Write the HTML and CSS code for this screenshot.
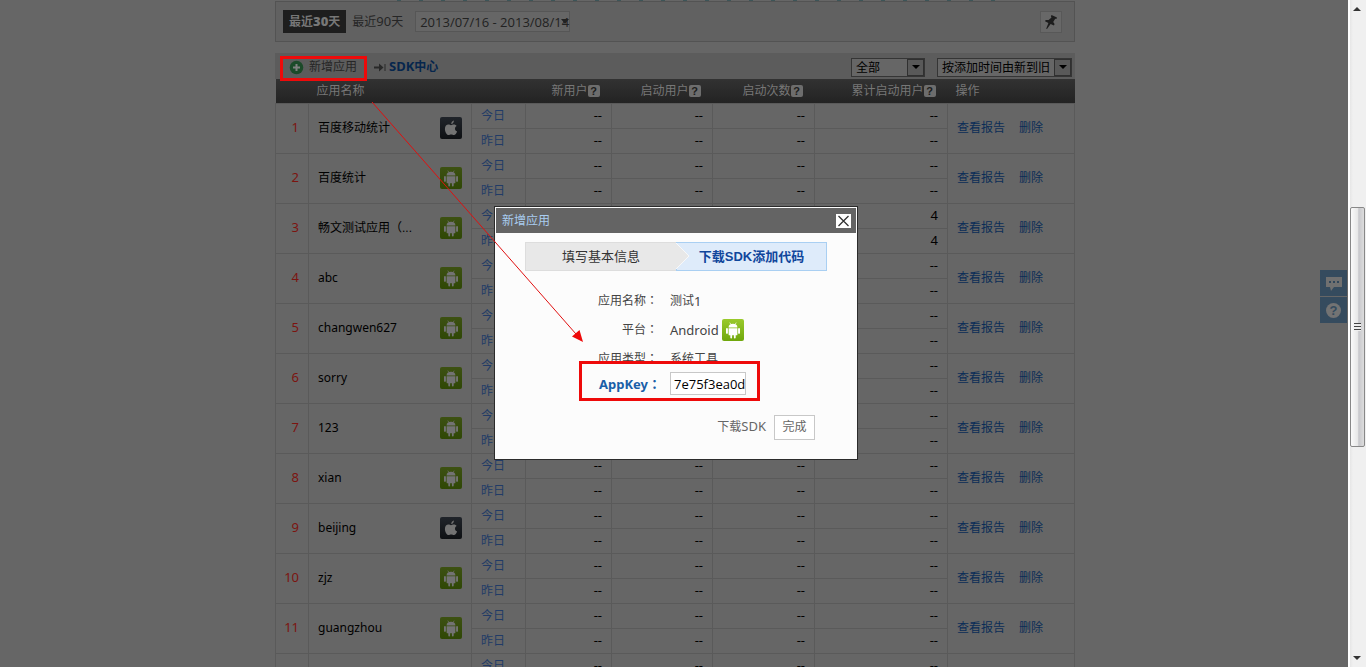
FILE: index.html
```
<!DOCTYPE html>
<html lang="zh-CN">
<head>
<meta charset="utf-8">
<title>百度移动统计</title>
<link rel="stylesheet" href="styles.css">
</head>
<body>
<svg class="defs" aria-hidden="true">
  <defs>
    <linearGradient id="g-green" x1="0" y1="0" x2="0" y2="1"><stop offset="0" stop-color="#9aca2c"/><stop offset="1" stop-color="#6fa70c"/></linearGradient>
    <linearGradient id="g-green-dim" x1="0" y1="0" x2="0" y2="1"><stop offset="0" stop-color="#3d5112"/><stop offset="1" stop-color="#2f4705"/></linearGradient>
    <linearGradient id="g-dark" x1="0" y1="0" x2="0" y2="1"><stop offset="0" stop-color="#20242a"/><stop offset="1" stop-color="#0e1013"/></linearGradient>
    <g id="robot">
      <path d="M7.8 3.6 9 5.6M14.2 3.6 13 5.6" stroke="currentColor" stroke-width=".7" fill="none"/>
      <path fill="currentColor" d="M6.6 8.5a4.4 3.7 0 0 1 8.8 0zM6.6 9.2h8.8v6.2a.9.9 0 0 1-.9.9h-.8v2.2a.9.9 0 0 1-1.8 0v-2.2h-1.8v2.2a.9.9 0 0 1-1.8 0v-2.2h-.8a.9.9 0 0 1-.9-.9zM4 9.9a.95.95 0 0 1 1.9 0v4a.95.95 0 0 1-1.9 0zM16.1 9.9a.95.95 0 0 1 1.9 0v4a.95.95 0 0 1-1.9 0z"/>
    </g>
    <symbol id="android" viewBox="0 0 22 22"><rect width="22" height="22" rx="2" fill="url(#g-green-dim)"/><use href="#robot"/></symbol>
    <symbol id="android-lit" viewBox="0 0 22 22"><rect width="22" height="22" rx="2" fill="url(#g-green)"/><use href="#robot"/></symbol>
    <symbol id="apple" viewBox="0 0 22 22"><rect width="22" height="22" rx="2" fill="url(#g-dark)"/><path fill="currentColor" d="M11.2 7.1c0-2 1.2-3.200 2.700-3.600.1 1.800-1.200 3.500-2.700 3.600zM11 8.200c.8 0 1.500-.7 2.900-.7 1.200 0 2.100.6 2.700 1.400-2.300 1.400-2 4.500.5 5.500-.6 1.800-1.800 3.700-3.200 3.700-1.100 0-1.400-.6-2.700-.6s-1.700.6-2.700.6c-1.700 0-3.600-3.500-3.600-6.200 0-2.800 1.700-4.300 3.400-4.300 1.200 0 2 .6 2.700.6z"/></symbol>
  </defs>
</svg>
<div class="viewport">
  <main class="page">
    <div class="content">
      <div class="axis" aria-hidden="true"></div>
      <section class="filter">
        <button class="range range-on" type="button">最近<b class="lat">30</b>天</button>
        <button class="range" type="button">最近<span class="lat">90</span>天</button>
        <button class="dates" type="button"><span>2013/07/16 - 2013/08/14</span><i class="dates-arrow"></i></button>
        <button class="pin" type="button" aria-label="固定">
          <svg width="14" height="16" viewBox="0 0 14 16"><path fill="#1d1d1d" d="M7.500 1 13 3.500l-.6 1.500-1.200-.2-2 3.300 1.400 2-.7 1.300-3.300-1.500L3 15l-.8-.3 2.200-5.600L1 7.300l.7-1.400 2.900.1L7.500 3.500 6.900 2.200z"/></svg>
        </button>
      </section>
      <section class="list">
        <div class="toolbar">
          <button class="add" type="button">
            <svg width="15" height="15" viewBox="0 0 15 15"><circle cx="7.500" cy="7.500" r="6.800" fill="#1c4a29"/><path d="M7.500 4v7M4 7.500h7" stroke="#808080" stroke-width="2"/></svg>
            <span>新增应用</span>
          </button>
          <a class="sdk" href="#">
            <svg width="12" height="9" viewBox="0 0 12 9"><path fill="#292929" d="M0 3.500h5V.500l4.500 4-4.500 4v-3H0zM10.500 1h1v7h-1z"/></svg>
            <span><span class="lat">SDK</span>中心</span>
          </a>
          <label class="pick pick-all"><select aria-label="平台"><option>全部</option></select><i class="drop"></i></label>
          <label class="pick pick-sort"><select aria-label="排序"><option>按添加时间由新到旧</option></select><i class="drop"></i></label>
        </div>
        <table class="apps">
          <colgroup><col class="c-no"><col class="c-name"><col class="c-day"><col class="c-new"><col class="c-active"><col class="c-times"><col class="c-total"><col class="c-ops"></colgroup>
          <thead>
            <tr><th></th><th class="h-name">应用名称</th><th></th><th class="h-num">新用户<i class="q">?</i></th><th class="h-num">启动用户<i class="q">?</i></th><th class="h-num">启动次数<i class="q">?</i></th><th class="h-num">累计启动用户<i class="q">?</i></th><th class="h-ops">操作</th></tr>
          </thead>
          <tbody id="rows"></tbody>
        </table>
      </section>
      <div class="marks" aria-hidden="true">
        <div class="mark-add"></div>
        <svg class="mark-arrow" width="222" height="250" viewBox="0 0 222 250"><path d="M1 2 205 234" stroke="#e01010" stroke-width="1" fill="none"/><path d="M212 242 201 236.500 208.500 230z" fill="#ee0a0a"/></svg>
      </div>
    </div>
    <aside class="side">
      <button type="button" aria-label="留言"><svg width="18" height="18" viewBox="0 0 18 18"><path fill="#707070" d="M1 3h16v10H9l-3 4-1-4H1z"/><path fill="#30465a" d="M4 7h2v2H4zM8 7h2v2H8zM12 7h2v2h-2z"/></svg></button>
      <button type="button" aria-label="帮助"><i class="help">?</i></button>
    </aside>
  </main>
  <div class="scroll" aria-hidden="true"><i class="up"></i><div class="thumb"><i></i></div><i class="down"></i></div>
</div>
<div class="overlay">
  <section class="dialog" role="dialog" aria-label="新增应用">
    <header class="dialog-head"><span>新增应用</span>
      <button class="close" type="button" aria-label="关闭"><svg width="15" height="14" viewBox="0 0 15 14"><path d="M2.500 2 12.500 12M12.500 2 2.500 12" stroke="#333" stroke-width="1.300"/></svg></button>
    </header>
    <div class="dialog-body">
      <div class="steps">
        <div class="step">填写基本信息</div>
        <svg class="step-tip" width="14" height="28" viewBox="0 0 14 28"><path d="M0 1 13 14 0 27z" fill="#e8e8e8"/><path d="M0 1 13 14 0 27" fill="none" stroke="#f8f8f8"/></svg>
        <div class="step step-on">下载<span class="arial">SDK</span>添加代码</div>
      </div>
      <dl class="info">
        <dt>应用名称<span class="colon" lang="zh-TW">：</span></dt><dd>测试<span class="lat">1</span></dd>
        <dt>平台<span class="colon" lang="zh-TW">：</span></dt><dd><span class="lat">Android</span><svg class="lit" width="22" height="22"><use href="#android-lit"/></svg></dd>
        <dt>应用类型<span class="colon" lang="zh-TW">：</span></dt><dd>系统工具</dd>
      </dl>
      <div class="key">
        <label for="appkey">AppKey<span class="colon" lang="zh-TW">：</span></label>
        <input id="appkey" type="text" value="7e75f3ea0d" readonly>
      </div>
      <footer class="actions">
        <a href="#">下载<span class="lat">SDK</span></a>
        <button type="button">完成</button>
      </footer>
    </div>
  </section>
</div>
<script src="app.js"></script>
</body>
</html>
```
FILE: app.js
```
const apps = [
  ['百度移动统计', 'apple'], ['百度统计', 'android'], ['畅文测试应用（...', 'android', '4'],
  ['abc', 'android'], ['changwen627', 'android'], ['sorry', 'android'], ['123', 'android'],
  ['xian', 'android'], ['beijing', 'apple'], ['zjz', 'android'], ['guangzhou', 'android'], ['', '']
];
document.getElementById('rows').innerHTML = apps.map(([name, os, total = '--'], i) => {
  const nums = `<td class="num">--</td><td class="num">--</td><td class="num">--</td><td class="num">${total}</td>`;
  const cls = /^[a-z0-9]+$/.test(name) ? 'name-lat' : '';
  const label = name ? `<span class="${cls}">${name}</span><svg width="22" height="22"><use href="#${os}"/></svg>` : '';
  const ops = name ? '<a href="#">查看报告</a><a href="#">删除</a>' : '';
  return `<tr><td class="no" rowspan="2">${name ? i + 1 : ''}</td>
    <td class="name" rowspan="2"><div class="name-in">${label}</div></td>
    <td class="day">今日</td>${nums}
    <td class="ops" rowspan="2">${ops}</td></tr>
    ` + (name ? `<tr><td class="day">昨日</td>${nums}</tr>` : '<tr></tr>');
}).join('');
```
FILE: styles.css
```
* { box-sizing: border-box; }
body {
  margin: 0;
  overflow: hidden;
  background: #666;
  color: #000;
  font: 12px/18px "Liberation Sans", "Noto Sans CJK SC", sans-serif;
}
button, input, select { font: inherit; color: inherit; margin: 0; padding: 0; border: 0; background: none; border-radius: 0; }
a { text-decoration: none; color: inherit; }
i { font-style: normal; }
.defs { position: absolute; width: 0; height: 0; }
.lat { font-family: "Noto Sans", sans-serif; font-size: 13px; line-height: 16px; }
.name-lat { font-family: "Noto Sans", sans-serif; }
.arial { font-family: "Liberation Sans", sans-serif; }
.colon { font-family: "Noto Sans CJK TC", sans-serif; line-height: 16px; }

.viewport { display: flex; height: 100vh; overflow: hidden; }
.page { flex: 1; padding-left: 2px; position: relative; }
.content { position: relative; max-width: 800px; margin: 0 auto; }
.axis { height: 1px; margin: 0 66px 0 122px; background: repeating-linear-gradient(90deg, #3d5558 0 4px, #666 4px 22px); }

.filter {
  display: flex;
  align-items: center;
  height: 41px;
  padding: 0 12px 0 7px;
  background: #616161;
  border: 1px solid #535353;
}
.range { height: 23px; padding: 0 6px; color: #262626; }
.range-on { background: #1e1e1e; color: #777; font-weight: bold; }
.dates {
  display: flex;
  align-items: center;
  width: 155px;
  height: 21px;
  margin-left: 6px;
  padding: 0 0 0 4px;
  border: 1px solid #565656;
  background: #666;
  color: #222;
  font: 13px/18px "Open Sans", sans-serif;
  white-space: nowrap;
}
.dates-arrow { margin-left: -8px; border: 4px solid transparent; border-top: 5px solid #222; border-bottom: 0; }
.pin { display: grid; place-items: center; width: 22px; height: 22px; margin-left: auto; background: #686868; border: 1px solid #585858; }

.list { margin-top: 11px; }
.toolbar { display: flex; align-items: center; height: 26px; padding: 2px 3px 0 14px; background: #5c5c5c; }
.add { display: flex; align-items: center; gap: 5px; color: #262626; }
.sdk { display: flex; align-items: center; gap: 3px; margin-left: 17px; color: #06264d; font-weight: bold; }
.pick { display: flex; height: 19px; border: 1px solid #353535; background: #666; }
.pick select { flex: 1; min-width: 0; padding: 1px 0 0 4px; appearance: none; line-height: 17px; }
.pick-all { width: 74px; margin-left: auto; }
.pick-sort { width: 135px; margin-left: 12px; }
.drop { display: grid; place-items: center; width: 17px; background: #595959; border: 1px solid #303030; }
.drop::after { content: ""; border: 4px solid transparent; border-top-color: #000; border-bottom: 0; }

.apps { width: 100%; table-layout: fixed; border-collapse: collapse; }
.c-no { width: 33px; }
.c-name { width: 163px; }
.c-day { width: 54px; }
.c-new { width: 86px; }
.c-active { width: 101px; }
.c-times { width: 102px; }
.c-total { width: 133px; }
.apps thead { background: linear-gradient(#323232, #232323); color: #777; }
.apps th { height: 24px; padding: 0; font-weight: normal; line-height: 20px; }
.apps .h-name, .apps .h-ops { padding-left: 8px; text-align: left; }
.apps .h-num { padding-right: 12px; text-align: right; white-space: nowrap; }
.q {
  display: inline-block;
  width: 12px;
  height: 12px;
  border-radius: 2px;
  background: #6d6d6d;
  color: #1c1c1c;
  font: bold 11px/12px "Liberation Sans", sans-serif;
  text-align: center;
}
.apps td { height: 25px; padding: 0; border: 1px solid #5a5a5a; line-height: 20px; }
.apps .no { padding: 0 9px 2px 0; color: #7c1410; text-align: right; font: 13px/18px "Noto Sans", sans-serif; }
.name-in { display: flex; align-items: center; justify-content: space-between; padding: 0 9px; }
.name svg, .side { color: #737373; }
.apps .day { padding-left: 9px; color: #213b66; }
.apps .num { padding: 0 9px 2px 0; text-align: right; font: 13px/18px "Noto Sans", sans-serif; }
.apps .ops { padding-left: 9px; color: #0b2d57; }
.ops a + a { margin-left: 14px; }

.side { position: absolute; right: 1px; top: 270px; display: grid; gap: 1px; }
.side button { display: grid; place-items: center; width: 27px; height: 26px; background: #354b5e; }
.help { width: 15px; height: 15px; border-radius: 8px; background: #737373; color: #354b5e; font: bold 13px/15px "Liberation Sans", sans-serif; }

.scroll { display: flex; flex-direction: column; align-items: center; width: 18px; padding: 7px 0; background: linear-gradient(90deg, #fff 2px, #e6e6e6 2px, #f0f0f0 5px); }
.up { border: 4px solid transparent; border-bottom-color: #333; border-top: 0; }
.down { border: 4px solid transparent; border-top-color: #333; border-bottom: 0; margin-top: auto; }
.thumb { display: grid; place-items: center; width: 15px; height: 36vh; margin-top: 196px; border: 1px solid #888; border-radius: 2px; background: linear-gradient(90deg, #fafafa, #e8e8e8 50%, #c8c8cc 60%, #ddd); }
.thumb i { width: 7px; height: 8px; background: repeating-linear-gradient(#444 0 1px, #eee 1px 3px); }

.marks { position: absolute; inset: 0; z-index: 20; pointer-events: none; }
.mark-add { position: absolute; left: 5px; top: 56px; width: 87px; height: 25px; border: 3px solid #ee0a0a; }
.mark-arrow { position: absolute; left: 96px; top: 100px; }

.overlay { position: fixed; inset: 0 18px 0 0; z-index: 10; display: grid; place-items: center; padding: 0 0 2px 4px; }
.dialog { width: 364px; border: 1px solid #2b2b2b; background: #fcfcfc; color: #444; }
.dialog-head { display: flex; align-items: center; justify-content: space-between; height: 27px; padding: 1px 5px 0 6px; border: 1px solid #fcfcfc; background: #646464; color: #a9cdf0; }
.close { display: grid; place-items: center; background: #fff; }
.dialog-body { padding: 8px 30px 19px; }
.steps { display: grid; grid-template-columns: 1fr 1fr; height: 28px; position: relative; font-size: 13px; line-height: 27px; text-align: center; color: #333; }
.step { border: 1px solid #ddd; border-right: 0; background: #e8e8e8; }
.step-on { border: 1px solid #a9cff2; background: #deebfa; color: #10469c; font-weight: bold; }
.step-tip { position: absolute; left: 50%; top: 0; }
.info { display: grid; grid-template-columns: 133px 1fr; column-gap: 12px; grid-auto-rows: 29px; align-items: center; margin: 17px 0 0; }
.info dt { text-align: right; }
.info dd { display: flex; align-items: center; margin: 0; }
.lit { margin-left: 3px; color: #fff; }
.key { position: relative; display: flex; align-items: center; width: 181px; height: 40px; margin: -13px 0 0 54px; padding: 6px 0 0 17px; border: 3px solid #ee0a0a; background: #fcfcfc; }
.key label { width: 71px; color: #1a5fa8; font: bold 13px/20px "Noto Sans", "Noto Sans CJK SC", sans-serif; white-space: nowrap; }
.key input { width: 76px; height: 23px; padding: 0 0 0 3px; border: 1px solid #c8c8c8; background: #fff; color: #000; font: 13px/20px "Open Sans", sans-serif; }
.actions { display: flex; align-items: center; justify-content: flex-end; gap: 8px; margin: 14px 12px 0 0; color: #666; }
.actions button { width: 41px; height: 25px; border: 1px solid #c8c8c8; background: #fff; }
```
